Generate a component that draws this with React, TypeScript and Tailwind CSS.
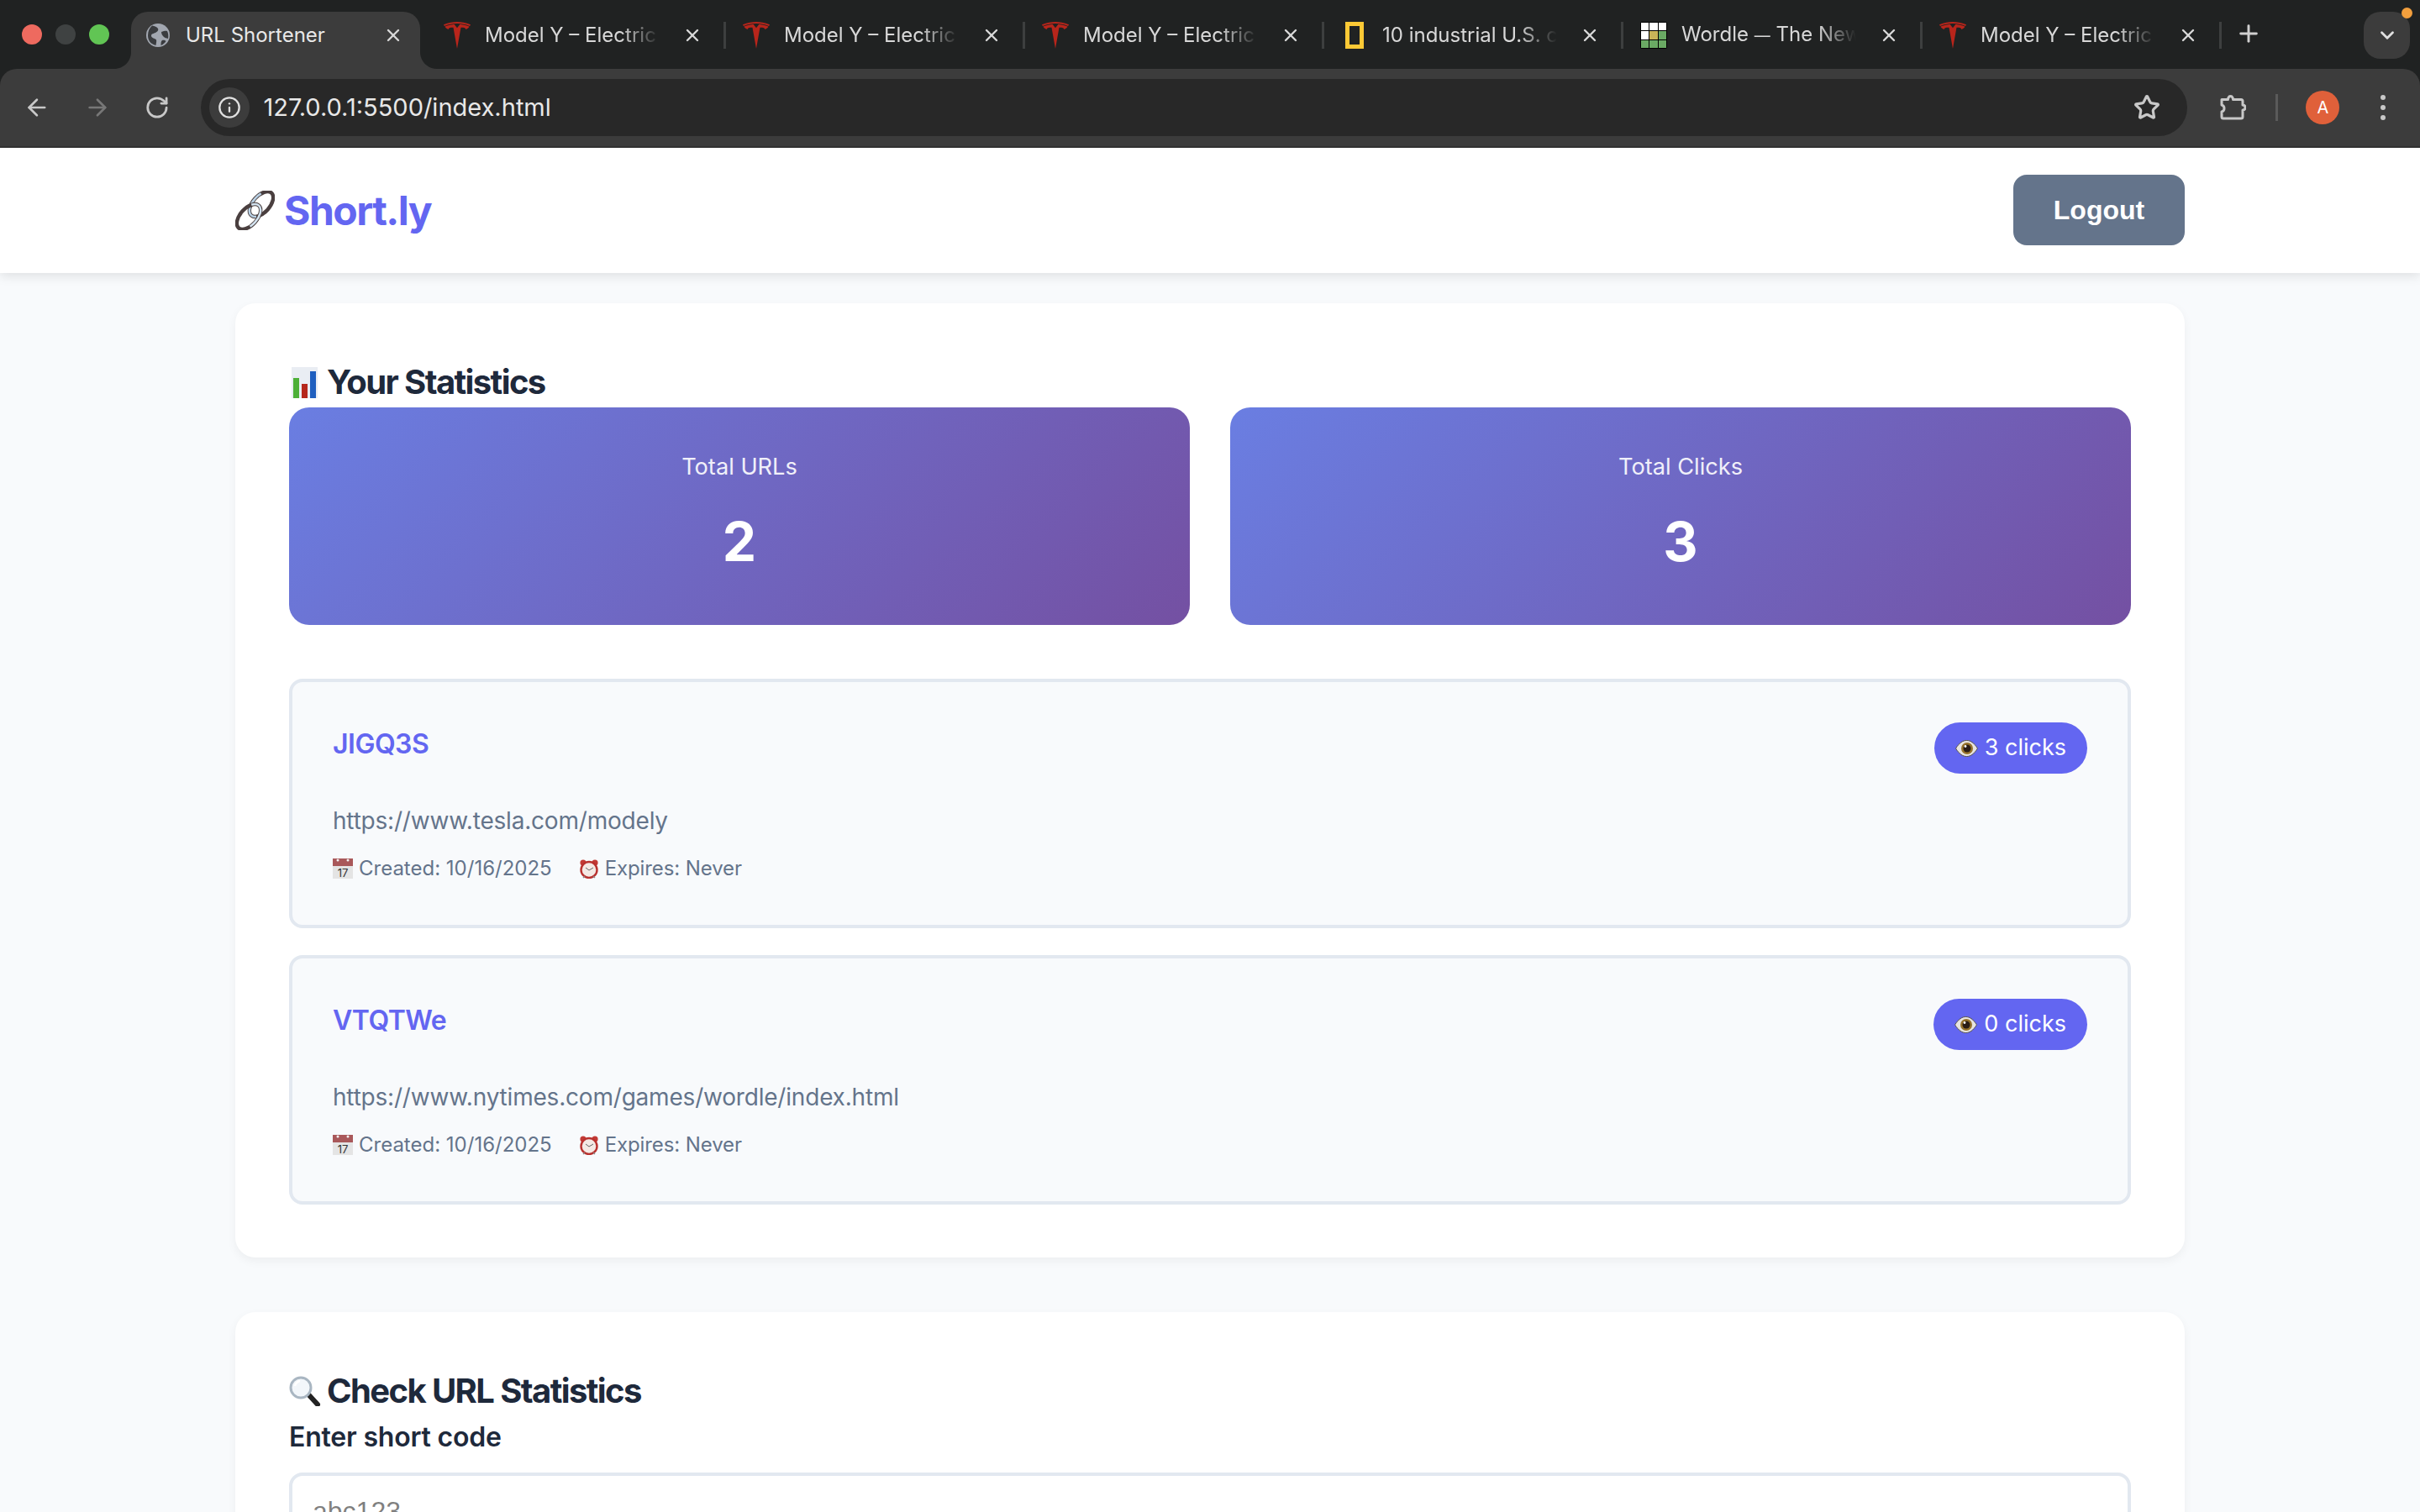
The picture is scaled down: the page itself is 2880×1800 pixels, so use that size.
import React from "react";
import { SiTesla } from "react-icons/si";
import { ArrowLeft, ArrowRight, RotateCw, Info, Star, X, Plus, ChevronDown } from "lucide-react";

function Globe() {
  return (
    <svg width="28" height="28" viewBox="0 0 28 28">
      <circle cx="14" cy="14" r="14" fill="#a2a7b0" />
      <path d="M7 2.500c3 .5 6 1.500 7 3.500s-1 4-3 5-5 1-5 3.500 3 3 5 4 1 4 .5 7.500C5 24.500 2 20 2 14c0-5 2-9 5-11.500z" fill="#3a3c3f" />
      <path d="M18 10c3-1 5-1.500 7-1 1.500 3 1.500 6 1 9-2-.5-4-1-5.500-2.500S18 12 18 10zM19 20c2-.5 3.500 0 4.500 1-1.500 2.500-3.500 4-6 5 0-2.500 0-5 1.500-6z" fill="#3a3c3f" />
    </svg>
  );
}

function NatGeo() {
  return <div className="w-[22px] h-[32px] border-[5px] border-[#fcc935] ml-[5px] mr-[5px]" />;
}

function Wordle() {
  const cells = ["#fff", "#fff", "#fff", "#fff", "#c9b458", "#6aaa64", "#6aaa64", "#6aaa64", "#6aaa64"];
  return (
    <div className="w-[32px] h-[32px] grid grid-cols-3 gap-[1px] bg-black p-[1px] rounded-[2px]">
      {cells.map((c, i) => (
        <div key={i} style={{ background: c }} />
      ))}
    </div>
  );
}

function PuzzleIcon() {
  return (
    <svg width="32" height="32" viewBox="0 0 32 32" fill="none" stroke="#c8c8c8" strokeWidth="3" strokeLinejoin="round" className="ml-[38px] shrink-0">
      <path d="M3 6.500h7.500c0-1 .5-4 3-4s3 3 3 4H26a2 2 0 0 1 2 2V13c2 0 3 1.500 3 3s-1 3-3 3v8a2 2 0 0 1-2 2H5a2 2 0 0 1-2-2v-6c2-.5 3-1.500 3-4s-1-3.500-3-4V6.500z" />
    </svg>
  );
}

function Tab({ icon, title, active, fade = true }: { icon: React.ReactNode; title: React.ReactNode; active?: boolean; fade?: boolean }) {
  return (
    <div className="relative w-[356px] h-[82px] shrink-0">
      {active && (
        <div className="absolute left-[6px] right-[6px] top-[14px] bottom-0 bg-[#3c3c3c] rounded-t-[20px]">
          <svg className="absolute -left-[20px] bottom-0" width="20" height="20" viewBox="0 0 20 20">
            <path d="M20 0v20H0c11 0 20-9 20-20z" fill="#3c3c3c" />
          </svg>
          <svg className="absolute -right-[20px] bottom-0" width="20" height="20" viewBox="0 0 20 20">
            <path d="M0 0v20h20C9 20 0 11 0 0z" fill="#3c3c3c" />
          </svg>
        </div>
      )}
      <div className="relative flex items-center h-[82px] pl-[22px] pt-[2px]">
        <div className="w-[32px] h-[32px] flex items-center justify-center shrink-0">{icon}</div>
        <div
          className={
            fade
              ? "ml-[17px] w-[208px] overflow-hidden whitespace-nowrap text-[24px] leading-[32px] text-[#d8d8d8] [mask-image:linear-gradient(to_right,black_78%,transparent_100%)]"
              : "ml-[17px] w-[208px] overflow-hidden whitespace-nowrap text-[24px] leading-[32px] text-[#e8e8e8]"
          }
        >
          {title}
        </div>
        <X className="ml-[27px] text-[#d8d8d8]" size={24} strokeWidth={2.4} />
      </div>
      {!active && <div className="absolute right-[-2px] top-[26px] w-[3px] h-[32px] bg-[#3d3f3f]" />}
    </div>
  );
}

function ChromeBar() {
  const tesla = <SiTesla size={32} color="#b8251b" />;
  return (
    <>
      <div className="flex items-start h-[82px] bg-[#202222] pl-[26px] relative">
        <div className="flex gap-[16px] pt-[29px] mr-[20px]">
          <div className="w-[24px] h-[24px] rounded-full bg-[#ee6a5f]" />
          <div className="w-[24px] h-[24px] rounded-full bg-[#3f4242]" />
          <div className="w-[24px] h-[24px] rounded-full bg-[#61c554]" />
        </div>
        <Tab icon={<Globe />} title="URL Shortener" active fade={false} />
        <Tab icon={tesla} title="Model Y – Electric Vehicle" />
        <Tab icon={tesla} title="Model Y – Electric Vehicle" />
        <Tab icon={tesla} title="Model Y – Electric Vehicle" />
        <Tab icon={<NatGeo />} title="10 industrial U.S. cities" />
        <Tab
          icon={<Wordle />}
          title={
            <>
              Wordle <span className="text-[19px]">—</span> The New York
            </>
          }
        />
        <Tab icon={tesla} title="Model Y – Electric Vehicle" />
        <Plus className="ml-[18px] mt-[24px] text-[#d0d0d0]" size={32} strokeWidth={2.2} />
        <div className="relative ml-[121px] mt-[14px] w-[55px] h-[56px] rounded-[20px] bg-[#3c3c3c] flex items-center justify-center">
          <ChevronDown className="text-[#e0e0e0]" size={26} strokeWidth={2.6} />
          <div className="absolute right-[-3px] top-[-5px] w-[13px] h-[13px] rounded-full bg-[#f29f3d]" />
        </div>
      </div>
      <div className="flex items-center h-[94px] bg-[#3c3c3c] border-b-2 border-[#313131] rounded-t-[20px] pl-[28px] pr-[28px]">
        <ArrowLeft className="text-[#c8c8c8]" size={32} strokeWidth={2} />
        <ArrowRight className="ml-[40px] text-[#777777]" size={32} strokeWidth={2} />
        <RotateCw className="ml-[40px] text-[#c8c8c8]" size={30} strokeWidth={2.2} />
        <div className="ml-[38px] w-[2364px] h-[68px] rounded-full bg-[#282828] flex items-center pl-[10px] pr-[32px] shrink-0">
          <div className="w-[48px] h-[48px] rounded-full bg-[#3c3c3c] flex items-center justify-center">
            <Info className="text-[#e0e0e0]" size={28} strokeWidth={2} />
          </div>
          <div className="ml-[16px] text-[29px] text-[#e8e8e8] flex-1">127.0.0.1:5500/index.html</div>
          <Star className="text-[#c8c8c8]" size={32} strokeWidth={2.4} />
        </div>
        <PuzzleIcon />
        <div className="ml-[35px] w-[3px] h-[32px] bg-[#5a5a5a]" />
        <div className="ml-[33px] w-[40px] h-[40px] rounded-full bg-[#e0603a] flex items-center justify-center text-white text-[20px]">A</div>
        <div className="ml-[36px] w-[32px] flex flex-col items-center gap-[6px]">
          <div className="w-[6px] h-[6px] rounded-full bg-[#c8c8c8]" />
          <div className="w-[6px] h-[6px] rounded-full bg-[#c8c8c8]" />
          <div className="w-[6px] h-[6px] rounded-full bg-[#c8c8c8]" />
        </div>
      </div>
    </>
  );
}

function LinkEmoji() {
  return (
    <svg width="47" height="47" viewBox="0 0 47 47" fill="none" className="shrink-0">
      <g transform="rotate(-48 31 16)">
        <ellipse cx="31" cy="16" rx="18" ry="10" stroke="#4a3f3f" strokeWidth="4.4" />
        <ellipse cx="31" cy="16" rx="18" ry="10" stroke="#b8d0e4" strokeWidth="2.6" strokeDasharray="38 50" strokeDashoffset="50" />
      </g>
      <g transform="rotate(-48 16 31)">
        <ellipse cx="16" cy="31" rx="18" ry="10" stroke="#4a3f3f" strokeWidth="4.4" />
        <ellipse cx="16" cy="31" rx="18" ry="10" stroke="#d3e3f0" strokeWidth="2.6" strokeDasharray="42 50" strokeDashoffset="12" />
      </g>
    </svg>
  );
}

function ChartEmoji() {
  return (
    <svg width="31" height="37" viewBox="0 0 31 37" className="shrink-0 ml-[3px]">
      <rect width="31" height="37" fill="#e9edf3" />
      <rect x="2" y="13" width="7" height="24" fill="#4db038" />
      <rect x="12" y="20" width="7" height="17" fill="#b5261b" />
      <rect x="22" y="5" width="7" height="32" fill="#1f5fbf" />
    </svg>
  );
}

function SearchEmoji() {
  return (
    <svg width="38" height="36" viewBox="0 0 38 36" className="shrink-0">
      <path d="M23 22l11 12" stroke="#222" strokeWidth="6" strokeLinecap="round" />
      <circle cx="14" cy="14" r="12" fill="#f2f6fa" stroke="#a9b6c2" strokeWidth="3" />
      <path d="M7 12a8 8 0 0 1 6-6" stroke="#fff" strokeWidth="2.500" fill="none" />
    </svg>
  );
}

function CalendarEmoji() {
  return (
    <svg width="24" height="24" viewBox="0 0 24 24" className="shrink-0">
      <rect width="24" height="24" fill="#e4e4e4" />
      <rect width="24" height="9" fill="#a9585a" />
      <circle cx="6" cy="2" r="1.500" fill="#f4f4f4" />
      <circle cx="18" cy="2" r="1.500" fill="#f4f4f4" />
      <text x="12" y="22" textAnchor="middle" fontSize="13" fontFamily="Inter, sans-serif" fill="#333">17</text>
    </svg>
  );
}

function ClockEmoji() {
  return (
    <svg width="24" height="24" viewBox="0 0 24 24" className="shrink-0">
      <circle cx="5" cy="5" r="3.600" fill="#c23a35" />
      <circle cx="19" cy="5" r="3.600" fill="#c23a35" />
      <circle cx="12" cy="13.500" r="9.500" fill="#f4e9e4" stroke="#b9312e" strokeWidth="2.400" />
      <path d="M12 14l-4-3M12 14l5-3" stroke="#666" strokeWidth="1" />
      <path d="M5 23l2-2M19 23l-2-2" stroke="#888" strokeWidth="1.400" />
    </svg>
  );
}

function EyeEmoji() {
  return (
    <svg width="27" height="20" viewBox="0 0 27 20" className="shrink-0">
      <path d="M0.500 10C5 3 9 .5 13.500 .5S22 3 26.500 10C22 17 18 19.500 13.500 19.500S5 17 .5 10z" fill="#e8e4e0" stroke="#55504e" strokeWidth="1" />
      <circle cx="14" cy="10" r="7" fill="#97722a" />
      <circle cx="14" cy="10" r="4.500" fill="#2a1c14" />
      <circle cx="12" cy="7.500" r="1.400" fill="#fff" />
    </svg>
  );
}

function Item({ code, url, clicks }: { code: string; url: string; clicks: string }) {
  return (
    <div className="border-4 border-[#e2e8f0] bg-[#f8fafc] rounded-[16px] p-[48px] h-[297px]">
      <div className="flex justify-between items-start h-[61px]">
        <div className="text-[32px] leading-[52px] font-semibold tracking-[-0.5px] text-[#6366f1]">{code}</div>
        <div className="h-[61px] rounded-full bg-[#6366f1] text-white flex items-center gap-[8px] px-[25px] text-[27px]">
          <EyeEmoji />
          <span>{clicks} clicks</span>
        </div>
      </div>
      <div className="mt-[33px] text-[28px] leading-[46px] tracking-[-0.2px] text-[#64748b]">{url}</div>
      <div className="mt-[14px] flex items-center text-[24px] leading-[39px] text-[#64748b] gap-[32px]">
        <span className="flex items-center gap-[7px]">
          <CalendarEmoji />
          Created: 10/16/2025
        </span>
        <span className="flex items-center gap-[7px] tracking-[-0.1px]">
          <ClockEmoji />
          Expires: Never
        </span>
      </div>
    </div>
  );
}

function Stat({ label, value }: { label: string; value: string }) {
  return (
    <div className="rounded-[24px] h-[259px] bg-[linear-gradient(135deg,#6a7ee2_0%,#7450a2_100%)] flex flex-col items-center pt-[49px] text-white">
      <div className="text-[27.200px] leading-[43px] text-white/90">{label}</div>
      <div className="mt-[20px] text-[64px] leading-[96px] font-bold">{value}</div>
    </div>
  );
}

export default function App() {
  return (
    <div
      className="w-[2880px] h-[1800px] overflow-hidden flex flex-col bg-[#202222]"
      style={{ fontFamily: "Inter, 'Noto Sans', sans-serif" }}
    >
      <ChromeBar />
      <div className="flex-1 overflow-hidden bg-[#f8fafc] flex flex-col">
        <header className="h-[149px] shrink-0 bg-white shadow-[0_4px_12px_rgba(0,0,0,0.1)]">
          <div className="w-[2320px] mx-auto h-full flex items-center justify-between">
            <div className="flex items-center gap-[11px]">
              <LinkEmoji />
              <span className="text-[48px] font-bold tracking-[-1.5px] text-[#6366f1]">Short.ly</span>
            </div>
            <button
              className="w-[204px] h-[84px] mt-[-1px] rounded-[16px] bg-[#64748b] text-white text-[32px] font-bold"
              style={{ fontFamily: "'Liberation Sans', Arial, sans-serif" }}
            >
              Logout
            </button>
          </div>
        </header>
        <main className="w-[2320px] mx-auto pt-[36px] flex flex-col gap-[65px]">
          <section className="bg-white rounded-[24px] shadow-[0_4px_12px_rgba(0,0,0,0.05)] p-[64px] h-[1136px]">
            <h2 className="flex items-center gap-[11px] text-[40px] leading-[60px] font-bold tracking-[-1.6px] text-[#1e293b]">
              <ChartEmoji />
              Your Statistics
            </h2>
            <div className="grid grid-cols-2 gap-[48px]">
              <Stat label="Total URLs" value="2" />
              <Stat label="Total Clicks" value="3" />
            </div>
            <div className="mt-[64px] flex flex-col gap-[32px]">
              <Item code="JIGQ3S" url="https://www.tesla.com/modely" clicks="3" />
              <Item code="VTQTWe" url="https://www.nytimes.com/games/wordle/index.html" clicks="0" />
            </div>
          </section>
          <section className="bg-white rounded-[24px] shadow-[0_4px_12px_rgba(0,0,0,0.05)] p-[64px]">
            <h2 className="flex items-center gap-[7px] text-[40px] leading-[60px] font-bold tracking-[-1.6px] text-[#1e293b]">
              <SearchEmoji />
              Check URL Statistics
            </h2>
            <label className="block text-[32px] leading-[50px] font-semibold tracking-[-0.2px] text-[#1e293b] mb-[17px]">Enter short code</label>
            <input
              className="w-full border-4 border-[#e2e8f0] rounded-[16px] px-[24px] py-[24px] text-[32px] leading-[37px] outline-none"
              style={{ fontFamily: "'Liberation Sans', Arial, sans-serif" }}
              placeholder="abc123"
            />
          </section>
        </main>
      </div>
    </div>
  );
}
